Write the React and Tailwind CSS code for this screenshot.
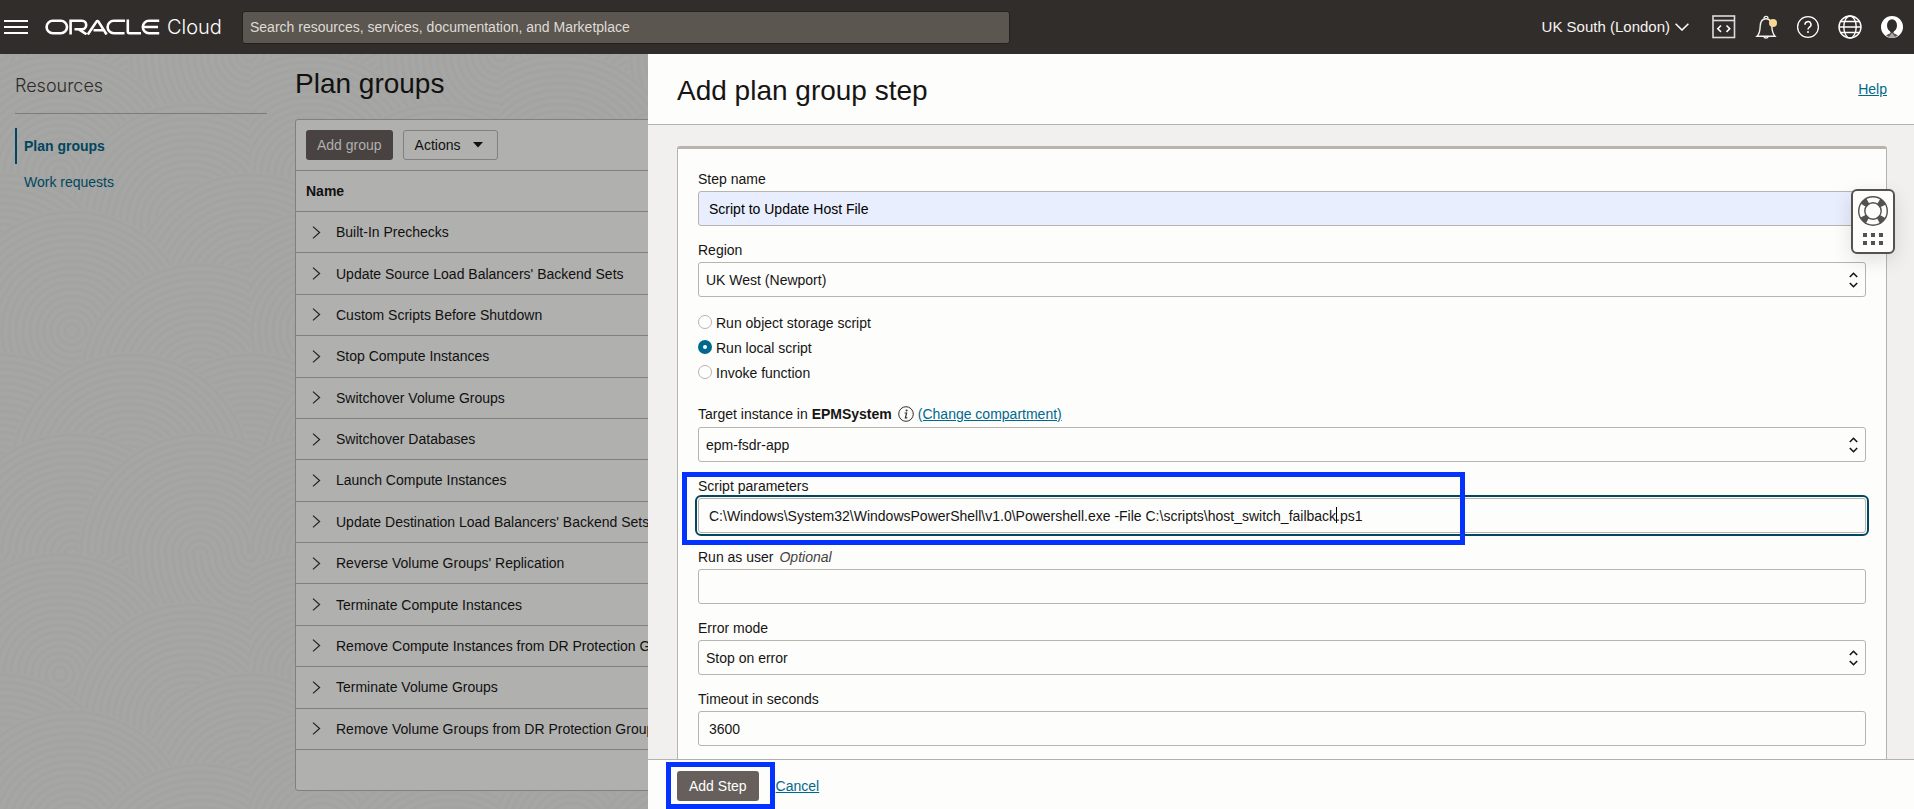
import React from "react";

const groups = [
  "Built-In Prechecks",
  "Update Source Load Balancers' Backend Sets",
  "Custom Scripts Before Shutdown",
  "Stop Compute Instances",
  "Switchover Volume Groups",
  "Switchover Databases",
  "Launch Compute Instances",
  "Update Destination Load Balancers' Backend Sets",
  "Reverse Volume Groups' Replication",
  "Terminate Compute Instances",
  "Remove Compute Instances from DR Protection Group",
  "Terminate Volume Groups",
  "Remove Volume Groups from DR Protection Group",
];

const control =
  "block h-[35px] w-full rounded-[3px] border border-[#b8b3ad] bg-[#fdfdfc] text-sm text-[#161513] outline-none";

function OracleMark() {
  return (
    <svg role="img" aria-label="Oracle" width="115" height="16" viewBox="0 0 115 16" fill="none" stroke="#fff" strokeWidth="2.6">
      <rect x="1.6" y="1.8" width="20.4" height="12.4" rx="6.2" />
      <path d="M25.6 15.5V1.8H37a4.2 4.2 0 0 1 0 8.4H29.5M33.5 10.2L41.5 15.3" />
      <path d="M42.8 15.5L51.6 2.4a1 1 0 0 1 1.7 0L61.6 15.5M48.5 11.2H59" />
      <path d="M80 1.8H68.8a6.2 6.2 0 0 0 0 12.4H79.5" />
      <path d="M82.8 .5V12.6a1.6 1.6 0 0 0 1.6 1.6H96" />
      <path d="M114.2 1.8H104a6.2 6.2 0 0 0 0 12.4H114.2M98.5 8H113" />
    </svg>
  );
}

function CodeIcon() {
  return (
    <svg width="24" height="24" viewBox="0 0 24 24" fill="none" stroke="#dedcda" strokeWidth="1.6">
      <rect x="1" y="1" width="21.5" height="21.5" />
      <path d="M1 5.5H22.5" />
      <path d="M9 10.5L5.8 13.7L9 16.9M14.5 10.5L17.7 13.7L14.5 16.9" stroke="#fff" />
    </svg>
  );
}

function BellIcon() {
  return (
    <svg width="24" height="24" viewBox="0 0 24 24" fill="none" stroke="#f2f1f0" strokeWidth="1.4">
      <path d="M10 3.4a2 2 0 0 1 4 0" />
      <path d="M3 21.2C6 18.5 6 15 6.2 11.2C6.4 6.5 8 3.7 12 3.7S17.6 6.5 17.8 11.2C18 15 18.5 18.5 21 21.2Z" />
      <path d="M9.8 21.5a2.3 2.3 0 0 0 4.4 0" />
      <circle cx="19" cy="8" r="4" fill="#f8d795" stroke="none" />
    </svg>
  );
}

function HelpIcon() {
  return (
    <svg width="24" height="24" viewBox="0 0 24 24" fill="none" stroke="#fff" strokeWidth="1.3">
      <circle cx="12" cy="12" r="10.4" />
      <path d="M9 9.8a3 3 0 1 1 4.6 2.3c-1 .7-1.6 1.1-1.6 2.4" strokeWidth="1.5" />
      <circle cx="12" cy="17" r="1" fill="#fff" stroke="none" />
    </svg>
  );
}

function GlobeIcon() {
  return (
    <svg width="24" height="24" viewBox="0 0 24 24" fill="none" stroke="#fff" strokeWidth="1.4">
      <circle cx="12" cy="12" r="11" />
      <ellipse cx="12" cy="12" rx="6.2" ry="11" />
      <path d="M1 12H23M3 6.5H21M3 17.5H21" />
    </svg>
  );
}

function UserIcon() {
  return (
    <svg width="24" height="24" viewBox="0 0 24 24">
      <circle cx="12" cy="12" r="11" fill="#fff" />
      <ellipse cx="12" cy="10.5" rx="5" ry="6.2" fill="#312d2a" />
      <path d="M9.5 15H14.5L13.2 18H10.8Z" fill="#312d2a" />
      <path d="M6 20.6C7.5 19.2 9.5 18.8 10.8 17.8H13.2C14.5 18.8 16.5 19.2 18 20.6A11 11 0 0 1 6 20.6Z" fill="#5a5653" />
      <path d="M12 17.8L8.6 22.2H15.4Z" fill="#a9a7a5" />
    </svg>
  );
}

function LifebuoyIcon() {
  return (
    <svg width="32" height="32" viewBox="0 0 32 32" fill="none" className="shrink-0">
      <circle cx="16" cy="16" r="11" stroke="#55514d" strokeWidth="7" strokeDasharray="6 11.279" strokeDashoffset="-5.64" />
      <circle cx="16" cy="16" r="14.3" stroke="#55514d" strokeWidth="1.4" />
      <circle cx="16" cy="16" r="8.2" stroke="#55514d" strokeWidth="1.4" />
    </svg>
  );
}

function DotsIcon() {
  return (
    <svg width="20" height="12" viewBox="0 0 20 12" fill="#55514d" className="shrink-0">
      <path d="M0 0h4v4H0zM8 0h4v4H8zM16 0h4v4h-4zM0 8h4v4H0zM8 8h4v4H8zM16 8h4v4h-4z" />
    </svg>
  );
}

const rings = [7, 14, 21, 28, 35, 42, 49, 56, 63, 70, 77, 84, 91, 98, 105, 112, 119];
const swirls = [
  [0, 0], [140, 40], [250, 0], [60, 120], [190, 170], [0, 240], [250, 240], [72, 277],
  [200, 330], [0, 420], [250, 420], [130, 420], [72, 500], [200, 500],
];

function Backdrop() {
  return (
    <svg className="absolute inset-0 size-full" aria-hidden="true">
      <defs>
        <pattern id="swirl" width="250" height="500" patternUnits="userSpaceOnUse">
          <rect width="250" height="500" fill="#a6a6a4" />
          {swirls.map(([x, y]) => (
            <g key={`${x}-${y}`} stroke="#a3a3a1" strokeWidth="3" fill="none">
              <circle cx={x} cy={y} r="122" fill="#a6a6a4" stroke="none" />
              {rings.map((r) => (
                <circle key={r} cx={x} cy={y} r={r} />
              ))}
            </g>
          ))}
        </pattern>
      </defs>
      <rect width="100%" height="100%" fill="url(#swirl)" />
    </svg>
  );
}

function TopBar() {
  return (
    <header className="flex h-[54px] shrink-0 items-center bg-[#312d2a] pr-[10px] pl-1">
      <button aria-label="Menu" className="flex h-[54px] w-6 items-center">
        <svg width="24" height="14" viewBox="0 0 24 14" fill="#fff">
          <path d="M0 0h24v2H0zM0 6h24v2H0zM0 12h24v2H0z" />
        </svg>
      </button>
      <a href="#" className="ml-[17px] flex w-[197px] items-center gap-[7px] text-white">
        <OracleMark />
        <span className="font-['Inter','Liberation_Sans',sans-serif] text-[20px] leading-7 font-light">Cloud</span>
      </a>
      <input
        aria-label="Search"
        placeholder="Search resources, services, documentation, and Marketplace"
        className="h-[33px] w-[768px] min-w-0 rounded-[3px] border border-[#25211e] bg-[#5b564f] px-[7px] text-sm text-white outline-none placeholder:text-[#dfdcd8]"
      />
      <button className="ml-auto flex shrink-0 items-center gap-[5px] text-[15px] text-[#f5f4f2]">
        UK South (London)
        <svg width="14" height="8" viewBox="0 0 14 8" fill="none" stroke="#fff" strokeWidth="1.6">
          <path d="M.6 .8L7 7L13.4 .8" />
        </svg>
      </button>
      <div className="ml-[23px] flex items-center gap-[18px]">
        <button aria-label="Developer tools"><CodeIcon /></button>
        <button aria-label="Announcements"><BellIcon /></button>
        <button aria-label="Help"><HelpIcon /></button>
        <button aria-label="Language"><GlobeIcon /></button>
        <button aria-label="Profile"><UserIcon /></button>
      </div>
    </header>
  );
}

function Sidebar() {
  return (
    <nav className="w-[252px] shrink-0 pt-[18px]">
      <h2 className="border-b border-[#7d7c7a] pb-[13px] font-['Inter','Liberation_Sans',sans-serif] text-[18px] leading-7 font-light text-[#2c2b29]">
        Resources
      </h2>
      <ul className="mt-[14px] text-sm text-[#00465e]">
        <li>
          <a href="#" className="flex h-9 items-center border-l-2 border-[#00465e] pl-[7px] font-bold">Plan groups</a>
        </li>
        <li>
          <a href="#" className="flex h-[35px] items-center pl-[9px]">Work requests</a>
        </li>
      </ul>
    </nav>
  );
}

function PlanGroups() {
  return (
    <section className="min-w-0 flex-1 pt-3">
      <h1 className="text-[28px] leading-9 text-[#111]">Plan groups</h1>
      <div className="mt-[17px] rounded-[3px] border border-[#81807e] bg-[#b0b0ae] text-[#111]">
        <div className="flex h-[50px] items-center gap-[10px] px-[10px]">
          <button className="h-[30px] rounded-[3px] bg-[#484240] px-[11px] text-sm text-[#b0afae]">Add group</button>
          <button className="flex h-[30px] items-center gap-3 rounded-[3px] border border-[#81807e] px-[11px] text-sm">
            Actions
            <svg className="mr-[3px]" width="10" height="6" viewBox="0 0 10 6"><path d="M0 0H10L5 5.5Z" fill="#111" /></svg>
          </button>
        </div>
        <table className="h-[580px] w-full border-collapse text-left text-sm">
          <thead>
            <tr className="h-[41px] border-y border-[#81807e]">
              <th className="p-0 pl-[10px] font-bold">Name</th>
            </tr>
          </thead>
          <tbody>
            {groups.map((name) => (
              <tr key={name} className="border-b border-[#81807e]">
                <td className="p-0 pl-[16px]">
                  <div className="flex items-center gap-[15px] whitespace-nowrap">
                    <button aria-label={`Expand ${name}`}>
                      <svg width="9" height="13" viewBox="0 0 9 13" fill="none" stroke="#222" strokeWidth="1.2">
                        <path d="M1 .6L7.6 6.5L1 12.4" />
                      </svg>
                    </button>
                    {name}
                  </div>
                </td>
              </tr>
            ))}
          </tbody>
        </table>
        <div className="h-10" />
      </div>
    </section>
  );
}

function Field({ id, label, note, children }) {
  return (
    <div className="mb-[14px]">
      <label htmlFor={id} className="mb-0.5 block h-5 text-sm leading-5">
        {label}
        {note && <em className="ml-[6px] text-[#45423f]">{note}</em>}
      </label>
      {children}
    </div>
  );
}

function SelectBox({ id, value }) {
  return (
    <div className="relative">
      <select id={id} defaultValue={value} className={`${control} appearance-none pr-7 pl-[7px]`}>
        <option>{value}</option>
      </select>
      <svg className="pointer-events-none absolute top-[10px] right-2" width="9" height="16" viewBox="0 0 9 16" fill="none" stroke="#161513" strokeWidth="1.6">
        <path d="M.8 5L4.5 1.3L8.2 5M.8 11L4.5 14.7L8.2 11" />
      </svg>
    </div>
  );
}

function Radio({ label, checked }) {
  return (
    <label className="flex h-5 items-center gap-1 text-sm">
      <input
        type="radio"
        name="script-type"
        defaultChecked={checked}
        className="mb-0.5 size-[14px] appearance-none rounded-full border border-[#b8b3ad] bg-white checked:border-[5px] checked:border-[#00688c]"
      />
      {label}
    </label>
  );
}

function SupportWidget() {
  return (
    <button
      aria-label="Support"
      className="absolute top-[135px] right-[19px] flex h-[65px] w-11 flex-col items-center gap-[6px] rounded-md border-2 border-[#55514d] bg-[#fdfdfc] pt-1 shadow-[0_6px_20px_rgba(0,0,0,0.12)]"
    >
      <LifebuoyIcon />
      <DotsIcon />
    </button>
  );
}

function StepDrawer() {
  return (
    <aside className="absolute inset-y-0 right-0 left-[648px] flex flex-col bg-[#f2f0ef] text-[#161513]">
      <div className="flex h-[71px] shrink-0 items-center justify-between border-b border-[#b5b1ad] bg-[#fdfdfc] pr-[27px] pl-[29px]">
        <h2 className="pt-[3px] text-[28px] leading-9">Add plan group step</h2>
        <a href="#" className="text-sm text-[#00688c] underline">Help</a>
      </div>
      <div className="min-h-0 flex-1 overflow-hidden pt-[21px] pr-[27px] pl-[29px]">
        <form className="min-h-full rounded-t-[3px] border border-t-[3px] border-[#b8b3ad] bg-[#fdfdfc] p-5">
          <Field id="step-name" label="Step name">
            <input id="step-name" defaultValue="Script to Update Host File" className="block h-[35px] w-full rounded-[3px] border border-[#b8b3ad] bg-[#e8eefd] px-[10px] text-sm text-black outline-none" />
          </Field>
          <Field id="region" label="Region">
            <SelectBox id="region" value="UK West (Newport)" />
          </Field>
          <div className="mb-5 flex flex-col items-start gap-[5px] pt-0.5">
            <Radio label="Run object storage script" />
            <Radio label="Run local script" checked />
            <Radio label="Invoke function" />
          </div>
          <div className="mb-[14px]">
            <div className="mb-0.5 flex h-[22px] items-center text-sm">
              <label htmlFor="target">
                Target instance in <b>EPMSystem</b>
              </label>
              <svg className="mr-1 ml-[6px]" width="16" height="16" viewBox="0 0 16 16" fill="none" stroke="#33302d">
                <circle cx="8" cy="8" r="7.3" />
                <circle cx="8.6" cy="4.6" r="1" fill="#33302d" stroke="none" />
                <path d="M6.6 7H8.6L7.4 11.8H9.3" strokeWidth="1.2" />
              </svg>
              <a href="#" className="text-[#00688c] underline">(Change compartment)</a>
            </div>
            <SelectBox id="target" value="epm-fsdr-app" />
          </div>
          <div className="relative">
            <Field id="params" label="Script parameters">
              <input
                id="params"
                defaultValue="C:\Windows\System32\WindowsPowerShell\v1.0\Powershell.exe -File C:\scripts\host_switch_failback.ps1"
                className={`${control} px-[10px] outline-2 outline-offset-1 outline-[#00475f] outline-solid`}
              />
            </Field>
            <span className="absolute top-[31px] left-[638px] h-4 w-px bg-black" />
            <div className="pointer-events-none absolute -top-1 -left-4 h-[73px] w-[783px] border-[5px] border-[#0433ff]" />
          </div>
          <Field id="run-as" label="Run as user" note="Optional">
            <input id="run-as" className={`${control} px-[10px]`} />
          </Field>
          <Field id="error-mode" label="Error mode">
            <SelectBox id="error-mode" value="Stop on error" />
          </Field>
          <Field id="timeout" label="Timeout in seconds">
            <input id="timeout" defaultValue="3600" className={`${control} px-[10px]`} />
          </Field>
        </form>
      </div>
      <div className="flex shrink-0 items-center gap-[17px] border-t border-[#b5b1ad] bg-[#fdfdfc] pt-[11px] pb-2 pl-[29px]">
        <div className="relative">
          <button className="block h-[30px] rounded-[3px] bg-[#665f5b] px-3 text-sm text-white">Add Step</button>
          <div className="pointer-events-none absolute -top-[9px] -left-[11px] h-[47px] w-[109px] border-[5px] border-[#0433ff]" />
        </div>
        <a href="#" className="text-sm text-[#00688c] underline">Cancel</a>
      </div>
      <SupportWidget />
    </aside>
  );
}

export default function App() {
  return (
    <div className="flex h-screen flex-col overflow-hidden font-['Liberation_Sans',Arial,sans-serif]">
      <TopBar />
      <main className="relative min-h-0 flex-1 overflow-hidden bg-[#a6a6a4]">
        <Backdrop />
        <div className="relative flex gap-7 pl-[15px]">
          <Sidebar />
          <PlanGroups />
        </div>
        <StepDrawer />
      </main>
    </div>
  );
}
